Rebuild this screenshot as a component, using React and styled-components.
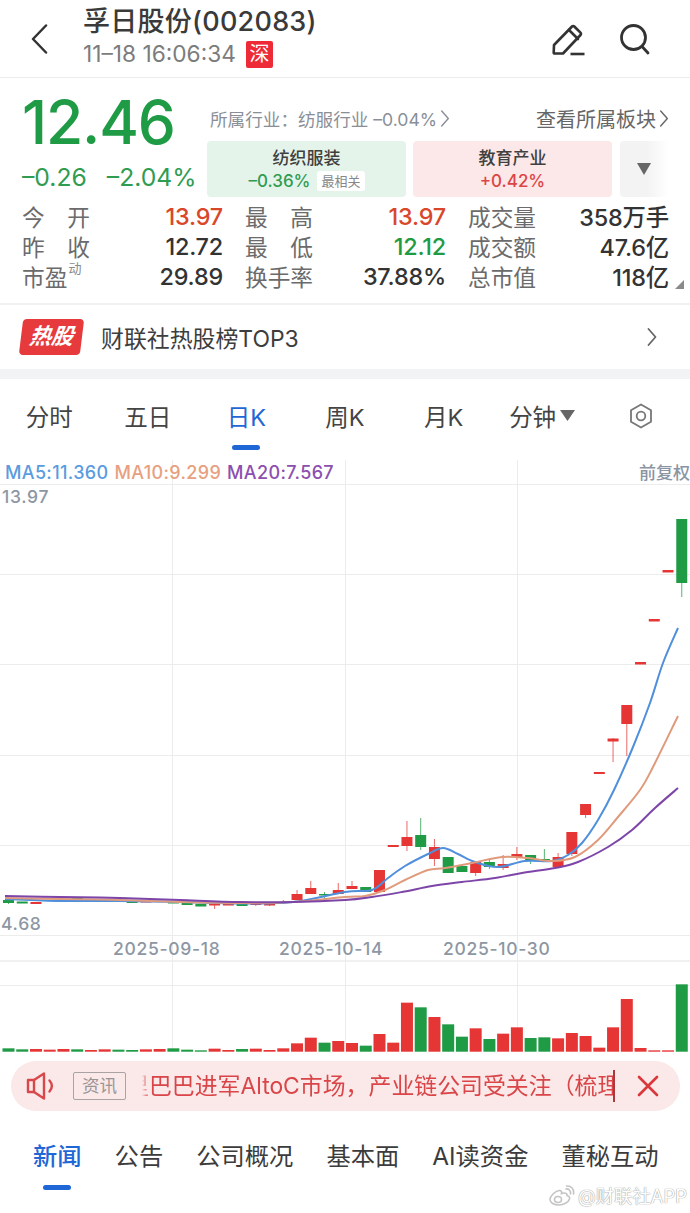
import React from "react";
import styled, { createGlobalStyle } from "styled-components";

const GlobalStyle = createGlobalStyle`
    html, body {
        margin: 0;
        padding: 0;
        background: #fff;
        font-family: "Inter", "Noto Sans CJK SC", sans-serif;
    }
    * { box-sizing: border-box; }
`;

const GREEN = "#1f9b45";
const RED = "#e63535";
const BLUE = "#1f66d6";

const Page = styled.div`
    width: 690px;
    height: 1213px;
    position: relative;
    overflow: hidden;
    background: #fff;
`;

/* top bar */
const Header = styled.header`
    height: 78px;
    display: flex;
    align-items: flex-start;
    padding: 6px 40px 0 28px;
    border-bottom: 1px solid #ececec;
`;
const BackButton = styled.div`
    width: 55px;
    padding-top: 18px;
`;
const TitleBlock = styled.div`
    flex: 1;
`;
const Title = styled.div`
    font-size: 27px;
    line-height: 31px;
    font-weight: 500;
    color: #3a3a3a;
    letter-spacing: 0.25px;
`;
const SubLine = styled.div`
    display: flex;
    align-items: center;
    gap: 10px;
    margin-top: 3px;
    font-size: 22.7px;
    line-height: 28px;
    color: #7c7c7c;
`;
const ExchangeTag = styled.span`
    width: 27px;
    height: 27px;
    border-radius: 2px;
    background: #ee2a37;
    color: #fff;
    font-size: 20px;
    line-height: 27px;
    text-align: center;
`;
const HeaderIcons = styled.div`
    display: flex;
    gap: 33px;
    padding-top: 17px;
`;

/* quote */
const Quote = styled.section`
    position: relative;
    height: 227px;
    padding: 0 21px 0 22px;
    border-bottom: 2px solid #f1f1f3;
`;
const QuoteTop = styled.div`
    display: flex;
    height: 119px;
`;
const PriceCol = styled.div`
    width: 185px;
    flex: none;
`;
const Price = styled.div`
    margin-top: 6px;
    height: 66px;
    font-size: 60.5px;
    line-height: 76px;
    font-weight: 500;
    letter-spacing: -1.2px;
    color: ${GREEN};
`;
const ChangeRow = styled.div`
    display: flex;
    gap: 20px;
    margin-top: 12px;
    font-size: 24.7px;
    line-height: 30px;
    white-space: nowrap;
    color: #2f9c52;
`;
const SectorCol = styled.div`
    flex: 1;
    padding-top: 27px;
`;
const SectorHead = styled.div`
    display: flex;
    align-items: center;
    justify-content: space-between;
    height: 26px;
    margin-bottom: 10px;
`;
const SectorLink = styled.span`
    display: flex;
    align-items: center;
    gap: 3px;
    margin-left: 3px;
    font-size: ${p => p.$size || 17.6}px;
    color: ${p => p.$color || "#8a8f97"};
`;
const CardRow = styled.div`
    display: flex;
    gap: 7px;
`;
const SectorCard = styled.div`
    width: 199px;
    height: 56px;
    border-radius: 4px;
    background: ${p => p.$bg};
    text-align: center;
    padding-top: 6px;
`;
const CardName = styled.div`
    font-size: 17px;
    line-height: 22px;
    font-weight: 500;
    color: #404040;
`;
const CardChange = styled.div`
    display: flex;
    justify-content: center;
    align-items: center;
    gap: 7px;
    font-size: 17px;
    line-height: 24px;
    font-weight: 500;
    color: ${p => p.$color};
`;
const BestTag = styled.span`
    padding: 0 4px;
    border-radius: 3px;
    background: #fff;
    color: #888;
    font-size: 13px;
    line-height: 20px;
    font-weight: 400;
`;
const MoreCard = styled.div`
    width: 49px;
    height: 56px;
    margin-left: 1px;
    border-radius: 4px 0 0 4px;
    background: linear-gradient(90deg, #f3f3f3 55%, #fff 100%);
    display: flex;
    align-items: center;
    padding-left: 17px;
`;
const StatsGrid = styled.div`
    display: grid;
    grid-template-columns: repeat(3, 201px);
    column-gap: 22px;
    grid-auto-rows: 30px;
    margin-top: 4px;
`;
const Stat = styled.div`
    display: flex;
    align-items: center;
    justify-content: space-between;
    font-size: 22.7px;
`;
const StatLabel = styled.span`
    display: flex;
    justify-content: ${p => (p.$plain ? "flex-start" : "space-between")};
    width: 68px;
    flex: none;
    white-space: nowrap;
    color: #6b6b6b;
`;
const Sup = styled.sup`
    font-size: 13px;
    line-height: 1;
    margin-left: 1px;
    color: #8a8a8a;
    align-self: flex-start;
    margin-top: 2px;
`;
const StatValue = styled.span`
    font-size: 23.4px;
    font-weight: 500;
    letter-spacing: -0.2px;
    color: ${p => p.$color || "#333"};
`;
const CornerMark = styled.div`
    position: absolute;
    right: 6px;
    bottom: 14px;
    width: 0;
    height: 0;
    border-style: solid;
    border-width: 0 0 9px 9px;
    border-color: transparent transparent #8a8a8a transparent;
`;

/* hot stock banner */
const HotBanner = styled.div`
    height: 64px;
    display: flex;
    align-items: center;
    padding: 0 33px 0 21px;
`;
const HotBadge = styled.div`
    width: 61px;
    height: 36px;
    border-radius: 4px;
    background: #e63a3c;
    color: #fff;
    transform: skewX(-7deg);
    font-size: 22px;
    font-weight: 700;
    font-style: italic;
    line-height: 35px;
    text-align: center;
    margin-right: 19px;
`;
const HotText = styled.div`
    flex: 1;
    font-size: 22.9px;
    color: #3d3d3d;
`;
const Band = styled.div`
    height: 10px;
    background: #f2f3f5;
`;

/* k-line tabs */
const ChartTabs = styled.nav`
    display: grid;
    grid-template-columns: repeat(7, 1fr);
    height: 81px;
`;
const ChartTab = styled.div`
    position: relative;
    display: flex;
    justify-content: center;
    align-items: center;
    gap: 4px;
    height: 73px;
    font-size: 23.5px;
    color: ${p => (p.$active ? BLUE : "#444")};
    ${p => p.$active && `
        &::after {
            content: "";
            position: absolute;
            left: 35px;
            top: 66px;
            width: 28px;
            height: 5px;
            border-radius: 3px;
            background: ${BLUE};
        }
    `}
`;

/* chart */
const ChartWrap = styled.div`
    position: relative;
    height: 592px;
`;
const ChartSvg = styled.svg`
    display: block;
`;
const Legend = styled.div`
    position: absolute;
    top: 3px;
    left: 5px;
    right: 0;
    display: flex;
    align-items: center;
    gap: 6px;
    font-size: 18px;
    line-height: 20px;
    font-weight: 500;
    letter-spacing: 0.35px;
`;
const LegendItem = styled.span`
    color: ${p => p.$color};
`;
const Adjust = styled.span`
    margin-left: auto;
    color: #8a94a3;
    font-size: 17px;
    letter-spacing: 0;
`;

/* news ticker */
const Ticker = styled.div`
    display: flex;
    align-items: center;
    width: 669px;
    height: 50px;
    margin: 9px 0 0 11px;
    padding: 0 21px 0 15px;
    border-radius: 25px;
    background: #fbe8e8;
`;
const ReadTag = styled.span`
    width: 53px;
    height: 28px;
    margin: 0 16px 0 17px;
    flex: none;
    border: 1.5px solid #a9a3a3;
    border-radius: 2px;
    color: #9a9595;
    font-size: 17.5px;
    line-height: 25px;
    text-align: center;
`;
const TickerText = styled.div`
    width: 473px;
    flex: none;
    height: 32px;
    overflow: hidden;
    white-space: nowrap;
    border-right: 2px solid #a83a3e;
    font-size: 22.9px;
    line-height: 32px;
    color: #d94548;
    -webkit-mask-image: linear-gradient(90deg, transparent 0, #000 7px);
    mask-image: linear-gradient(90deg, transparent 0, #000 7px);
`;
const TickerInner = styled.span`
    display: inline-block;
    margin-left: -16px;
`;
const CloseBtn = styled.div`
    margin-left: auto;
    display: flex;
`;

/* bottom tabs */
const NewsTabs = styled.nav`
    display: flex;
    gap: 33px;
    padding: 27px 0 0 33px;
`;
const NewsTab = styled.div`
    position: relative;
    font-size: 24.3px;
    line-height: 36px;
    font-weight: ${p => (p.$active ? 500 : 400)};
    color: ${p => (p.$active ? BLUE : "#3c3c3c")};
    ${p => p.$active && `
        &::after {
            content: "";
            position: absolute;
            left: 10px;
            top: 47px;
            width: 28px;
            height: 5px;
            border-radius: 3px;
            background: ${BLUE};
        }
    `}
`;
const Watermark = styled.div`
    position: absolute;
    right: 3px;
    bottom: 5px;
    display: flex;
    align-items: center;
    gap: 3px;
    color: #fff;
    font-size: 18.4px;
    line-height: 24px;
    text-shadow: 0 0 1px #9a9a9a, 0 0 1px #9a9a9a;
`;

const Chevron = ({ size = 9, height = 18, color = "#8a8f97", width = 1.5 }) => (
    <svg width={size} height={height} viewBox="0 0 9 18" fill="none">
        <path d="M1 1l7 8-7 8" stroke={color} strokeWidth={width} strokeLinecap="round" strokeLinejoin="round" />
    </svg>
);

const PencilIcon = () => (
    <svg width="36" height="34" viewBox="0 0 36 34" fill="none" stroke="#333" strokeWidth="2.6" strokeLinejoin="round" strokeLinecap="round">
        <path d="M3 22L21 3.500a1.600 1.600 0 0 1 2.300 0l6.200 6.200a1.600 1.600 0 0 1 0 2.300L12 30.500H3.500a.8.8 0 0 1-.8-.8z" />
        <path d="M18 7l9 9" />
        <path d="M19.500 31h14" strokeLinecap="butt" />
    </svg>
);

const SearchIcon = () => (
    <svg width="30" height="32" viewBox="0 0 30 32" fill="none" stroke="#333" strokeWidth="2.8" strokeLinecap="round">
        <circle cx="13.500" cy="14.500" r="12" />
        <path d="M22.500 24l5.500 6" />
    </svg>
);

const SettingIcon = () => (
    <svg width="24" height="26" viewBox="0 0 24 26" fill="none" stroke="#777" strokeWidth="1.8" strokeLinejoin="round">
        <path d="M12 1.500l10 5.700v11.600l-10 5.700-10-5.700V7.200z" />
        <circle cx="12" cy="13" r="4.300" />
    </svg>
);

const SpeakerIcon = () => (
    <svg width="30" height="28" viewBox="0 0 30 28" fill="none" stroke="#d8484b" strokeWidth="2.4" strokeLinejoin="round" strokeLinecap="round">
        <path d="M2 8h6v12H2z" />
        <path d="M8 8l10-6.500v25L8 20" />
        <path d="M23.500 8.500c3 3.500 3 7.500 0 11" />
    </svg>
);

const WeiboIcon = () => (
    <svg width="26" height="22" viewBox="0 0 26 22" fill="none" stroke="#c4c4c4" strokeWidth="1.6" strokeLinecap="round">
        <path d="M10 20c-5 0-9-2.300-9-5.500S6 6 10 5.500c2.500-.3 3 1.500 2.500 3 3-1 6-.5 5.500 2 2.500.8 3 2 2.500 3.500-1 3.500-6 6-10.500 6z" />
        <ellipse cx="9" cy="14.500" rx="3.500" ry="3" />
        <path d="M17 4c2.500-.5 5 1.500 4.500 5" />
        <path d="M17.500 1c4.500-.5 8 3 7 8" />
    </svg>
);

const CloseIcon = () => (
    <svg width="22" height="22" viewBox="0 0 22 22" fill="none" stroke="#d8383b" strokeWidth="2.6" strokeLinecap="round">
        <path d="M2 2l18 18M20 2L2 20" />
    </svg>
);

const CAND_X = i => 8.5 + i * 13.74;
const VOL_BASE = 1051.7;

// volume top of each bar, in 3x-crop units above y=780
const VOLS = [
    [805, "g"], [808, "g"], [807, "r"], [809, "r"], [807, "r"], [808, "g"], [810, "r"], [808, "r"], [809, "g"], [810, "g"],
    [808, "r"], [807, "r"], [805, "g"], [809, "g"], [811, "g"], [806, "r"], [810, "r"], [807, "g"], [806, "r"], [810, "r"],
    [805, "r"], [790, "r"], [773, "r"], [788, "g"], [783, "r"], [789, "r"], [797, "g"], [762, "r"], [788, "r"], [668, "r"],
    [682, "g"], [711, "r"], [733, "g"], [770, "g"], [745, "r"], [777, "g"], [761, "r"], [742, "r"], [774, "g"], [772, "g"],
    [775, "r"], [759, "r"], [768, "r"], [803, "r"], [742, "r"], [657, "r"], [804, "r"], [811, "r"], [811, "r"], [613, "g"],
];

// i, colour, body top, body bottom, wick top, wick bottom
const CANDLES = [
    [0, "g", 900, 903, 900, 904], [1, "g", 901.5, 903.5], [2, "r", 902, 904], [4, "r", 899, 900], [5, "g", 897.5, 899.5],
    [6, "r", 899, 900], [7, "r", 899.5, 900.5, 899, 902], [8, "g", 901, 902], [9, "g", 901, 903], [10, "r", 901, 902.5],
    [11, "r", 901, 902], [12, "g", 902, 903.5], [13, "g", 903, 905], [14, "g", 904, 906.5], [15, "r", 904, 905.5, 904, 909],
    [16, "r", 904, 905.5], [17, "g", 904, 906], [18, "r", 904, 905, 904, 906], [19, "r", 904, 905.5, 904, 906], [20, "r", 902, 903, 900, 904],
    [21, "r", 894, 900, 890, 900], [22, "r", 888, 894, 881, 894], [23, "g", 894, 895.5, 892, 899], [24, "r", 890, 894, 883, 894],
    [25, "r", 886, 889, 881, 889], [26, "g", 887, 892], [27, "r", 870, 892], [28, "r", 845, 847], [29, "r", 837, 846, 821, 851],
    [30, "g", 835, 847, 818, 850], [31, "r", 847, 859, 839, 866], [32, "g", 857, 873], [33, "g", 866, 872], [34, "r", 862, 873, 862, 876],
    [35, "g", 862, 867, 859, 869], [36, "r", 864, 868, 855, 870], [37, "r", 854, 857, 847, 860], [38, "g", 855, 860, 855, 864],
    [39, "g", 859, 861, 849, 861], [40, "r", 857, 867, 853, 867], [41, "r", 832, 854, 832, 856], [42, "r", 804, 815, 804, 818],
    [43, "r", 772, 774], [44, "r", 738.500, 741.500, 738, 762], [45, "r", 705, 724, 705, 756], [46, "r", 662, 664.500], [47, "r", 619, 621.500],
    [48, "r", 570, 572.500], [49, "g", 519, 583, 519, 597],
];

const MA5 = [
    [5, 899], [60, 901], [120, 901], [180, 902], [240, 903.500], [293, 902], [345, 892], [372, 890], [388, 878], [405, 866], [428, 854], [443, 848],
    [458, 854], [475, 862], [498, 867], [525, 861], [552, 861], [568, 855], [582, 843], [598, 820], [614, 790], [633, 747], [650, 703],
    [663, 663], [678, 628],
];
const MA10 = [
    [5, 898], [60, 899], [120, 900], [180, 902], [240, 903], [293, 902], [345, 897], [365, 896], [385, 890], [405, 880], [428, 870], [445, 868],
    [472, 863], [502, 857], [528, 858], [552, 861], [575, 857], [598, 840], [618, 817], [640, 790], [653, 767], [678, 716],
];
const MA20 = [
    [5, 896], [60, 897], [120, 898], [180, 900], [240, 902], [293, 902], [345, 900], [372, 897], [402, 892], [432, 886], [462, 882], [495, 878],
    [522, 873], [555, 868], [578, 862], [608, 847], [632, 830], [655, 808], [678, 788],
];

// catmull-rom through the sampled points
const smooth = pts => {
    let d = `M${pts[0][0]} ${pts[0][1]}`;
    for (let i = 0; i < pts.length - 1; i++) {
        const p0 = pts[i - 1] || pts[i];
        const p1 = pts[i];
        const p2 = pts[i + 1];
        const p3 = pts[i + 2] || p2;
        const c1 = [p1[0] + (p2[0] - p0[0]) / 6, p1[1] + (p2[1] - p0[1]) / 6];
        const c2 = [p2[0] - (p3[0] - p1[0]) / 6, p2[1] - (p3[1] - p1[1]) / 6];
        d += `C${c1[0].toFixed(1)} ${c1[1].toFixed(1)} ${c2[0].toFixed(1)} ${c2[1].toFixed(1)} ${p2[0]} ${p2[1]}`;
    }
    return d;
};

const colorOf = c => (c === "g" ? GREEN : RED);

const KChart = () => (
    <ChartSvg width="690" height="592" viewBox="0 460 690 592">
        {[484, 574, 664, 755, 845, 935, 985].map(y => (
            <line key={y} x1="0" x2="690" y1={y + 0.5} y2={y + 0.5} stroke="#ececec" />
        ))}
        <line x1="0" x2="690" y1="961" y2="961" stroke="#e2e2e2" />
        {[172, 345, 517].map(x => (
            <line key={x} x1={x + 0.5} x2={x + 0.5} y1="460" y2="1052" stroke="#ececec" />
        ))}
        {CANDLES.map(([i, c, top, bot, wt, wb]) => (
            <g key={i} fill={colorOf(c)} stroke={colorOf(c)}>
                {wt !== undefined && <line x1={CAND_X(i)} x2={CAND_X(i)} y1={wt} y2={wb} strokeWidth="1" opacity="0.75" />}
                <rect x={CAND_X(i) - 5.5} y={top} width="11" height={bot - top} strokeWidth="0" />
            </g>
        ))}
        <path d={smooth(MA5)} fill="none" stroke="#4f8fdc" strokeWidth="2" />
        <path d={smooth(MA10)} fill="none" stroke="#e09a7c" strokeWidth="2" />
        <path d={smooth(MA20)} fill="none" stroke="#7d45a8" strokeWidth="2" />
        {VOLS.map(([t, c], i) => {
            const top = 780 + t / 3;
            return <rect key={i} x={CAND_X(i) - 6} y={top} width="12" height={VOL_BASE - top} fill={colorOf(c)} />;
        })}
        <g fill="#8d96a3" fontSize="17.500" fontWeight="500" fontFamily="Inter, sans-serif" letterSpacing="0.7">
            <text x="2" y="503">13.97</text>
            <text x="1" y="930">4.68</text>
            <text x="113" y="955">2025-09-18</text>
            <text x="279" y="955">2025-10-14</text>
            <text x="443" y="955">2025-10-30</text>
        </g>
    </ChartSvg>
);

const STATS = [
    { label: ["今", "开"], value: "13.97", color: "#d9472b" },
    { label: ["最", "高"], value: "13.97", color: "#d9472b" },
    { label: ["成交量"], value: "358万手" },
    { label: ["昨", "收"], value: "12.72" },
    { label: ["最", "低"], value: "12.12", color: GREEN },
    { label: ["成交额"], value: "47.6亿" },
    { label: ["市盈"], sup: "动", value: "29.89" },
    { label: ["换手率"], value: "37.88%" },
    { label: ["总市值"], value: "118亿" },
];

const PERIODS = ["分时", "五日", "日K", "周K", "月K"];
const NEWS_TABS = ["新闻", "公告", "公司概况", "基本面", "AI读资金", "董秘互动"];

export default function App() {
    return (
        <Page>
            <GlobalStyle />
            <Header>
                <BackButton>
                    <svg width="20" height="30" viewBox="0 0 20 30" fill="none">
                        <path d="M18 1.500L5 15l13 13.500" stroke="#333" strokeWidth="2.500" strokeLinecap="round" strokeLinejoin="round" />
                    </svg>
                </BackButton>
                <TitleBlock>
                    <Title>孚日股份(002083)</Title>
                    <SubLine>
                        11–18 16:06:34
                        <ExchangeTag>深</ExchangeTag>
                    </SubLine>
                </TitleBlock>
                <HeaderIcons>
                    <PencilIcon />
                    <SearchIcon />
                </HeaderIcons>
            </Header>

            <Quote>
                <QuoteTop>
                    <PriceCol>
                        <Price>12.46</Price>
                        <ChangeRow>
                            <span>–0.26</span>
                            <span>–2.04%</span>
                        </ChangeRow>
                    </PriceCol>
                    <SectorCol>
                        <SectorHead>
                            <SectorLink>
                                所属行业：纺服行业 –0.04%
                                <Chevron size={10} height={17} />
                            </SectorLink>
                            <SectorLink $size={20} $color="#666">
                                查看所属板块
                                <Chevron size={10} height={17} color="#666" />
                            </SectorLink>
                        </SectorHead>
                        <CardRow>
                            <SectorCard $bg="#e5f4ea">
                                <CardName>纺织服装</CardName>
                                <CardChange $color="#2f9c52">
                                    –0.36%
                                    <BestTag>最相关</BestTag>
                                </CardChange>
                            </SectorCard>
                            <SectorCard $bg="#fce8e8">
                                <CardName>教育产业</CardName>
                                <CardChange $color="#dc4446">+0.42%</CardChange>
                            </SectorCard>
                            <MoreCard>
                                <svg width="14" height="12" viewBox="0 0 14 12">
                                    <path d="M0 0h14L7 12z" fill="#666" />
                                </svg>
                            </MoreCard>
                        </CardRow>
                    </SectorCol>
                </QuoteTop>
                <StatsGrid>
                    {STATS.map((s, i) => (
                        <Stat key={i}>
                            <StatLabel $plain={!!s.sup}>
                                {s.label.map(t => <span key={t}>{t}</span>)}
                                {s.sup && <Sup>{s.sup}</Sup>}
                            </StatLabel>
                            <StatValue $color={s.color}>{s.value}</StatValue>
                        </Stat>
                    ))}
                </StatsGrid>
                <CornerMark />
            </Quote>

            <HotBanner>
                <HotBadge>热股</HotBadge>
                <HotText>财联社热股榜TOP3</HotText>
                <Chevron size={10} height={18} color="#666" width={1.8} />
            </HotBanner>
            <Band />

            <ChartTabs>
                {PERIODS.map(t => (
                    <ChartTab key={t} $active={t === "日K"}>{t}</ChartTab>
                ))}
                <ChartTab>
                    分钟
                    <svg width="15" height="11" viewBox="0 0 15 11">
                        <path d="M0 0h15L7.500 11z" fill="#666" />
                    </svg>
                </ChartTab>
                <ChartTab>
                    <SettingIcon />
                </ChartTab>
            </ChartTabs>

            <ChartWrap>
                <KChart />
                <Legend>
                    <LegendItem $color="#5b9bdf">MA5:11.360</LegendItem>
                    <LegendItem $color="#e8a080">MA10:9.299</LegendItem>
                    <LegendItem $color="#8c4fb0">MA20:7.567</LegendItem>
                    <Adjust>前复权</Adjust>
                </Legend>
            </ChartWrap>

            <Ticker>
                <SpeakerIcon />
                <ReadTag>资讯</ReadTag>
                <TickerText>
                    <TickerInner>里巴巴进军AltoC市场，产业链公司受关注（梳理</TickerInner>
                </TickerText>
                <CloseBtn>
                    <CloseIcon />
                </CloseBtn>
            </Ticker>

            <NewsTabs>
                {NEWS_TABS.map(t => (
                    <NewsTab key={t} $active={t === "新闻"}>{t}</NewsTab>
                ))}
            </NewsTabs>

            <Watermark>
                <WeiboIcon />
                @财联社APP
            </Watermark>
        </Page>
    );
}
